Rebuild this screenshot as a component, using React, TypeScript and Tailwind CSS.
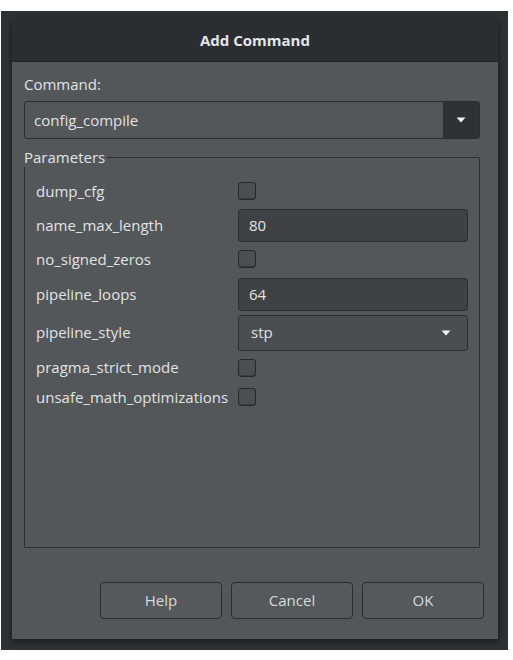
const params: { name: string; kind: "check" | "text" | "select"; value?: string }[] = [
  { name: "dump_cfg", kind: "check" },
  { name: "name_max_length", kind: "text", value: "80" },
  { name: "no_signed_zeros", kind: "check" },
  { name: "pipeline_loops", kind: "text", value: "64" },
  { name: "pipeline_style", kind: "select", value: "stp" },
  { name: "pragma_strict_mode", kind: "check" },
  { name: "unsafe_math_optimizations", kind: "check" },
];

// row heights tuned to the screenshot spacing
const rowHeights = ["h-[34px]", "h-[34px]", "h-[34px]", "h-[37px]", "h-[39px]", "h-[31px]", "h-[28px]"];

const Arrow = () => (
  <svg width="10" height="6" viewBox="0 0 10 6">
    <path d="M0.5 0.5h9L5 5.5z" fill="#f2f2f2" />
  </svg>
);

const Check = () => (
  <div className="w-[18px] h-[18px] rounded-[3px] border border-[#25282b] bg-[#4b4f52] shadow-[inset_0_-1px_0_#3a3d40]" />
);

const App: React.FC = () => {
  return (
    <div className="w-[513px] h-[660px] bg-white pt-[11px] pl-[1px]" style={{ fontFamily: '"Open Sans", "Noto Sans", sans-serif' }}>
      <div className="w-[507px] h-[639px] bg-[#2d3134] pt-[8px] pl-[11px]">
        <div className="w-[486px] h-[620px] flex flex-col rounded-t-[7px] overflow-hidden shadow-[0_2px_6px_rgba(0,0,0,0.5)]">
          {/* title bar */}
          <div className="h-[43px] shrink-0 flex items-center justify-center bg-[#2a2e31] border-b border-[#1f2224] text-[#e4e5e6] text-[15px] font-bold">
            Add Command
          </div>

          {/* body */}
          <div className="flex-1 flex flex-col bg-[#53575a] pl-[12px] pr-[18px] pt-[12px] pb-[20px] text-[15px] text-[#e2e3e4]">
            <div className="h-[20px] leading-[20px]">Command:</div>
            <div className="mt-[7px] h-[38px] flex rounded-[3px] border border-[#2b2e31] bg-[#53575a]">
              <div className="flex-1 flex items-center pl-[9px]">config_compile</div>
              <div className="w-[36px] flex items-center justify-center bg-[#2e3235] rounded-r-[2px]">
                <Arrow />
              </div>
            </div>

            <fieldset className="mt-[8px] h-[401px] border border-[#2e3134] rounded-[1px]">
              <legend className="pr-[2px] leading-[20px] -ml-[1px]">Parameters</legend>
              <div className="pt-[7px] pl-[11px] pr-[11px]">
                {params.map((p, i) => (
                  <div key={p.name} className={`flex items-center ${rowHeights[i]}`}>
                    <div className="w-[202px] whitespace-nowrap">{p.name}</div>
                    {p.kind === "check" && <Check />}
                    {p.kind === "text" && (
                      <div className="flex-1 h-[33px] flex items-center pl-[10px] rounded-[3px] border border-[#2b2e31] bg-[#3e4245]">
                        {p.value}
                      </div>
                    )}
                    {p.kind === "select" && (
                      <div className="flex-1 h-[36px] flex items-center justify-between pl-[12px] pr-[16px] rounded-[3px] border border-[#2b2e31] bg-[#4a4e51]">
                        <span>{p.value}</span>
                        <Arrow />
                      </div>
                    )}
                  </div>
                ))}
              </div>
            </fieldset>

            <div className="mt-auto flex justify-end gap-[9px] -mr-[4px]">
              {["Help", "Cancel", "OK"].map((b) => (
                <button
                  key={b}
                  className="w-[122px] h-[37px] rounded-[4px] border border-[#2b2e31] bg-[#55595c] text-[#d8dadb] text-[15px]"
                >
                  {b}
                </button>
              ))}
            </div>
          </div>
        </div>
      </div>
    </div>
  );
};

export default App;
